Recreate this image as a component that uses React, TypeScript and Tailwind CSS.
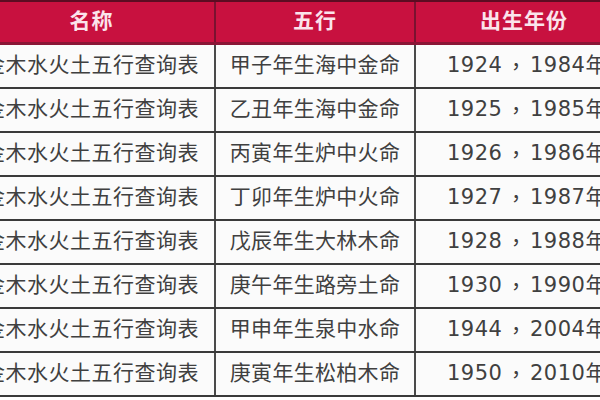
import React from 'react';

type row = {
  name: string;
  nayin: string;
  years: [string, string];
};

const rows: row[] = [
  { name: '金木水火土五行查询表', nayin: '甲子年生海中金命', years: ['1924', '1984年'] },
  { name: '金木水火土五行查询表', nayin: '乙丑年生海中金命', years: ['1925', '1985年'] },
  { name: '金木水火土五行查询表', nayin: '丙寅年生炉中火命', years: ['1926', '1986年'] },
  { name: '金木水火土五行查询表', nayin: '丁卯年生炉中火命', years: ['1927', '1987年'] },
  { name: '金木水火土五行查询表', nayin: '戊辰年生大林木命', years: ['1928', '1988年'] },
  { name: '金木水火土五行查询表', nayin: '庚午年生路旁土命', years: ['1930', '1990年'] },
  { name: '金木水火土五行查询表', nayin: '甲申年生泉中水命', years: ['1944', '2004年'] },
  { name: '金木水火土五行查询表', nayin: '庚寅年生松柏木命', years: ['1950', '2010年'] },
];

const App = () => {
  return (
    <div className="h-[400px] w-[600px] overflow-hidden bg-white">
      <div
        className="ml-[-31px] w-[680px] border-t-2 border-[#5c0c22] text-[21px] text-[#404040]"
        style={{ fontFamily: '"DejaVu Sans", "Noto Sans CJK SC", sans-serif' }}
      >
        {/* header */}
        <div className="grid h-[43px] grid-cols-[247px_200px_1fr] border-b-[3px] border-[#8a1636] bg-[#c8113f] font-bold text-[#fbe4ec]">
          <div className="flex items-center justify-center border-r-2 border-[#7a1230] tracking-[1px]">
            名称
          </div>
          <div className="flex items-center justify-center border-r-2 border-[#7a1230] tracking-[1px]">
            五行
          </div>
          <div className="flex w-[216px] items-center justify-center tracking-[1px]">
            出生年份
          </div>
        </div>

        {rows.map((r, index) => (
          <div
            key={index}
            className="grid h-[44px] grid-cols-[247px_200px_1fr] border-b-2 border-[#3a3a3a] bg-[#fbfbfb]"
          >
            <div className="flex items-center justify-center border-r-2 border-[#4a4a4a] tracking-[0.5px]">
              {r.name}
            </div>
            <div className="flex items-center justify-center border-r-2 border-[#4a4a4a] tracking-[0.3px]">
              {r.nayin}
            </div>
            <div className="flex items-center whitespace-nowrap pl-[31px] tracking-[0.5px]">
              {r.years[0]}
              <span
                className="mx-[3px]"
                style={{ fontFamily: '"Noto Sans CJK TC", sans-serif' }}
              >
                ，
              </span>
              {r.years[1]}
            </div>
          </div>
        ))}
      </div>
    </div>
  );
};

export default App;
